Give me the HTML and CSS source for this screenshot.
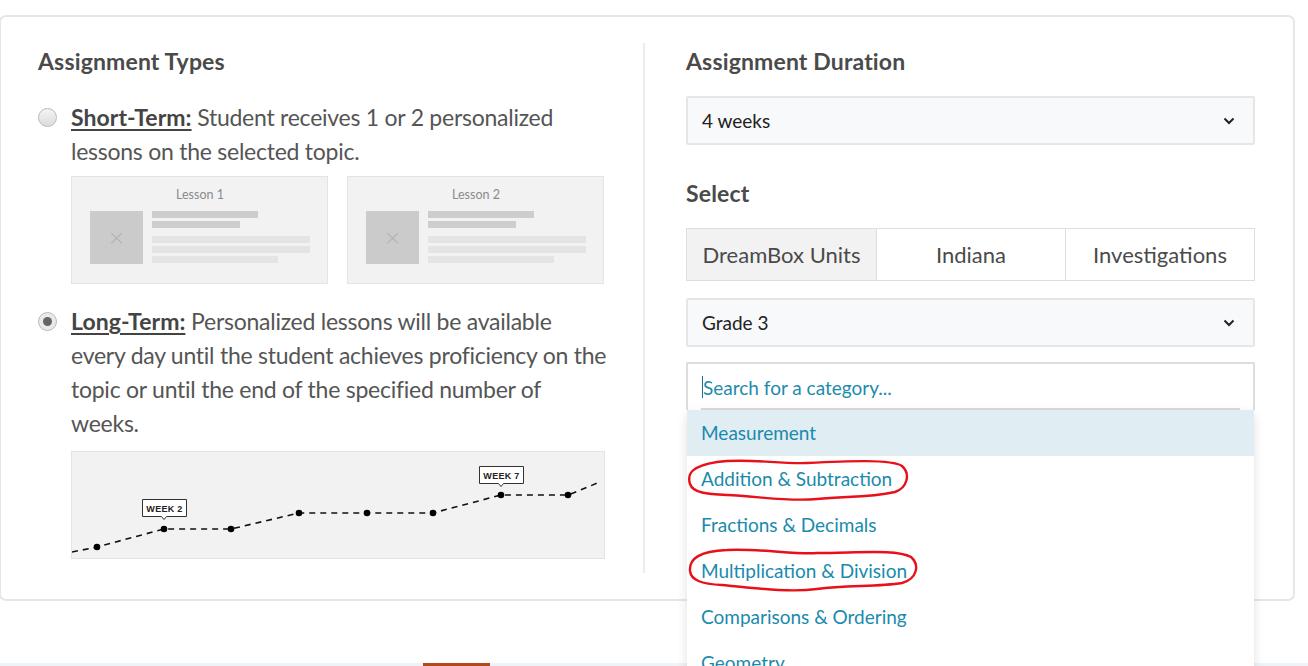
FILE: index.html
```html
<!DOCTYPE html>
<html>
<head>
<meta charset="utf-8">
<link rel="stylesheet" href="styles.css">
</head>
<body>
<div class="card">
  <div class="col col-left">
    <h2 class="heading">Assignment Types</h2>
    <div class="option">
      <span class="radio"></span>
      <div class="option-body">
        <p class="option-text"><span class="label">Short-Term:</span> Student receives 1 or 2 personalized<br>lessons on the selected topic.</p>
        <div class="lessons">
          <div class="lesson">
            <div class="lesson-title">Lesson 1</div>
            <div class="lesson-row">
              <div class="thumb">×</div>
              <div class="bars">
                <span class="bar dark w106"></span>
                <span class="bar dark w88"></span>
                <span class="bar light wfull spaced"></span>
                <span class="bar light wfull"></span>
                <span class="bar light w126"></span>
              </div>
            </div>
          </div>
          <div class="lesson">
            <div class="lesson-title">Lesson 2</div>
            <div class="lesson-row">
              <div class="thumb">×</div>
              <div class="bars">
                <span class="bar dark w106"></span>
                <span class="bar dark w88"></span>
                <span class="bar light wfull spaced"></span>
                <span class="bar light wfull"></span>
                <span class="bar light w126"></span>
              </div>
            </div>
          </div>
        </div>
      </div>
    </div>
    <div class="option option-long">
      <span class="radio checked"></span>
      <div class="option-body">
        <p class="option-text"><span class="label">Long-Term:</span> Personalized lessons will be available<br>every day until the student achieves proficiency on the<br>topic or until the end of the specified number of<br>weeks.</p>
        <div class="chart">
          <svg width="534" height="108" viewBox="0 0 534 108">
            <polyline points="1,101 26,96 93,78 160,78 228,62 296,62 362,62 430,44 497,44 529,31" fill="none" stroke="#111" stroke-width="1.6" stroke-dasharray="6 5"/>
            <g fill="#000">
              <circle cx="26" cy="96" r="3.3"/>
              <circle cx="93" cy="78" r="3.3"/>
              <circle cx="160" cy="78" r="3.3"/>
              <circle cx="228" cy="62" r="3.3"/>
              <circle cx="296" cy="62" r="3.3"/>
              <circle cx="362" cy="62" r="3.3"/>
              <circle cx="430" cy="44" r="3.3"/>
              <circle cx="497" cy="44" r="3.3"/>
            </g>
            <g>
              <path d="M71.5,48.5 h44 v17 h-20 l-2.5,3 l-2.5,-3 h-19 z" fill="#fff" stroke="#333" stroke-width="1"/>
              <text x="93.5" y="61" text-anchor="middle" class="wk">WEEK 2</text>
              <path d="M408.5,15.5 h44 v17 h-20 l-2.5,3 l-2.5,-3 h-19 z" fill="#fff" stroke="#333" stroke-width="1"/>
              <text x="430.5" y="28" text-anchor="middle" class="wk">WEEK 7</text>
            </g>
          </svg>
        </div>
      </div>
    </div>
  </div>
  <div class="divider"></div>
  <div class="col col-right">
    <h2 class="heading">Assignment Duration</h2>
    <div class="select">
      <span>4 weeks</span>
      <svg class="chev" width="12" height="8" viewBox="0 0 12 8"><path d="M1.5,1.5 L6,6 L10.5,1.5" fill="none" stroke="#222" stroke-width="2"/></svg>
    </div>
    <h2 class="heading heading-select">Select</h2>
    <div class="tabs">
      <div class="tab active">DreamBox Units</div>
      <div class="tab">Indiana</div>
      <div class="tab">Investigations</div>
    </div>
    <div class="select select-grade">
      <span>Grade 3</span>
      <svg class="chev" width="12" height="8" viewBox="0 0 12 8"><path d="M1.5,1.5 L6,6 L10.5,1.5" fill="none" stroke="#222" stroke-width="2"/></svg>
    </div>
    <div class="search-wrap">
      <div class="search">
        <span class="caret"></span><span class="placeholder">Search for a category...</span>
      </div>
      <div class="dropdown">
        <div class="item hl">Measurement</div>
        <div class="item">Addition &amp; Subtraction</div>
        <div class="item">Fractions &amp; Decimals</div>
        <div class="item">Multiplication &amp; Division</div>
        <div class="item">Comparisons &amp; Ordering</div>
        <div class="item">Geometry</div>
        <svg class="mark mark1" width="226" height="44" viewBox="0 0 226 44">
          <path d="M30,4 C60,0 90,6 120,5 C160,3 205,1 215,8 C224,16 220,30 208,34 C180,40 160,38 130,41 C100,44 70,38 40,37 C20,36 6,35 3,26 C0,16 4,8 30,4 Z" fill="none" stroke="#e8101a" stroke-width="2.4"/>
        </svg>
        <svg class="mark mark2" width="234" height="48" viewBox="0 0 234 48">
          <path d="M40,3 C70,1 110,8 130,6 C170,6 210,2 224,10 C233,18 230,32 215,36 C190,40 160,38 130,42 C100,46 60,40 35,38 C14,37 4,33 3,24 C2,12 12,4 40,3 Z" fill="none" stroke="#e8101a" stroke-width="2.4"/>
        </svg>
      </div>
    </div>
  </div>
</div>
<div class="strip"><span class="strip-tag"></span></div>
</body>
</html>
```
FILE: styles.css
```css
* { box-sizing: border-box; }
html, body { margin: 0; padding: 0; background: #fff; }
body {
  font-family: Lato, "Open Sans", sans-serif;
  color: #555;
  width: 1308px;
  height: 666px;
  overflow: hidden;
  padding-top: 15px;
  position: relative;
}
.card {
  width: 1296px;
  height: 586px;
  border: 2px solid #e6e6e6;
  border-radius: 7px;
  display: grid;
  grid-template-columns: 642px 2px 1fr;
  margin-left: -1px;
}
.col-left { padding: 30px 0 0 37px; }
.col-right { padding: 30px 38px 0 41px; position: relative; }
.divider { background: #ececec; margin: 26px 0 26px 0; width: 2px; }
.heading {
  margin: 0;
  font-size: 23px;
  line-height: 29px;
  font-weight: 700;
  color: #4a4a4a;
  letter-spacing: 0.15px;
}
.option { display: flex; margin-top: 24px; }
.option-long { margin-top: 20px; }
.radio {
  flex: none;
  width: 19px; height: 19px;
  border-radius: 50%;
  border: 1px solid #b9b9b9;
  background: linear-gradient(#f4f4f4, #dcdcdc);
  margin: 8px 14px 0 0;
  position: relative;
}
.radio.checked { background: #eaeaea; }
.radio.checked::after {
  content: "";
  position: absolute;
  left: 4px; top: 4px;
  width: 9px; height: 9px;
  border-radius: 50%;
  background: #666;
}
.option-body { flex: 1; }
.option-text {
  margin: 0;
  font-size: 23px;
  line-height: 34px;
  color: #555;
  width: 560px;
  white-space: nowrap;
  letter-spacing: -0.25px;
}
.label { font-weight: 700; color: #444; text-decoration: underline; text-underline-offset: 3px; letter-spacing: 0.05px; }
.lessons { display: flex; gap: 19px; margin-top: 8px; }
.lesson {
  width: 257px; height: 108px;
  background: #f2f2f2;
  border: 1px solid #e3e3e3;
  padding: 0 17px 0 18px;
}
.lesson-title {
  text-align: center;
  font-size: 12.5px;
  line-height: 14px;
  color: #8a8a8a;
  margin-top: 11px;
}
.lesson-row { display: flex; gap: 9px; margin-top: 9px; }
.thumb {
  width: 53px; height: 53px;
  background: #cbcbcb;
  color: #b3b3b3;
  font-size: 22px;
  line-height: 53px;
  text-align: center;
  font-family: "DejaVu Sans", sans-serif;
  font-weight: 300;
}
.bars { flex: 1; display: flex; flex-direction: column; gap: 3px; }
.bar { display: block; height: 7px; }
.bar.dark { background: #cdcdcd; }
.bar.light { background: #e4e4e4; }
.bar.spaced { margin-top: 5px; }
.w106 { width: 106px; }
.w88 { width: 88px; }
.w126 { width: 126px; }
.wfull { width: 100%; }
.chart {
  margin-top: 11px;
  width: 534px; height: 108px;
  background: #f2f2f2;
  border: 1px solid #e3e3e3;
  overflow: hidden;
}
.chart svg { display: block; margin: -1px 0 0 -1px; }
.wk { font-family: "Liberation Sans", Arial, sans-serif; font-size: 9px; font-weight: 700; fill: #222; letter-spacing: 0.3px; }
.select {
  margin-top: 20px;
  height: 49px;
  background: #f8f9fa;
  border: 2px solid #e6e6e6;
  border-radius: 2px;
  display: flex;
  align-items: center;
  justify-content: space-between;
  padding: 0 18px 0 14px;
  font-size: 19px;
  color: #222;
}
.heading-select { margin-top: 34px; }
.tabs {
  margin-top: 20px;
  display: grid;
  grid-template-columns: 1fr 1fr 1fr;
  height: 53px;
  border: 1px solid #dedede;
}
.tab {
  display: flex;
  align-items: center;
  justify-content: center;
  font-size: 22px;
  color: #4a4a4a;
  background: #fff;
  border-left: 1px solid #dedede;
  letter-spacing: 0;
}
.tab:first-child { border-left: none; }
.tab.active { background: #f2f2f2; }
.select-grade { margin-top: 17px; }
.search-wrap { margin-top: 15px; position: relative; }
.search {
  height: 48px;
  border: 2px solid #dddddd;
  border-bottom: none;
  border-radius: 2px 2px 0 0;
  display: flex;
  align-items: center;
  padding: 0 14px;
  font-size: 19px;
  color: #1d8bab;
  position: relative;
}
.search::after {
  content: "";
  position: absolute;
  left: 13px; right: 13px; bottom: 0;
  height: 2px;
  background: #dadada;
}
.caret { width: 1px; height: 22px; background: #1d6f88; }
.dropdown {
  position: absolute;
  left: 1px; right: 1px; top: 48px;
  background: #fff;
  box-shadow: 0 4px 10px rgba(0,0,0,0.12);
  height: 260px;
  overflow: hidden;
  z-index: 2;
}
.item {
  height: 46px;
  line-height: 46px;
  padding-left: 14px;
  font-size: 19px;
  color: #1a8aad;
}
.item.hl { background: #e0edf3; }
.mark { position: absolute; pointer-events: none; }
.mark1 { left: 0; top: 48px; }
.mark2 { left: 0; top: 137px; }
.strip {
  position: absolute;
  left: 0; right: 0; top: 663px;
  height: 3px;
  background: #eef3f8;
}
.strip-tag {
  position: absolute;
  left: 423px; top: 0;
  width: 67px; height: 3px;
  background: #b34a16;
}
```
